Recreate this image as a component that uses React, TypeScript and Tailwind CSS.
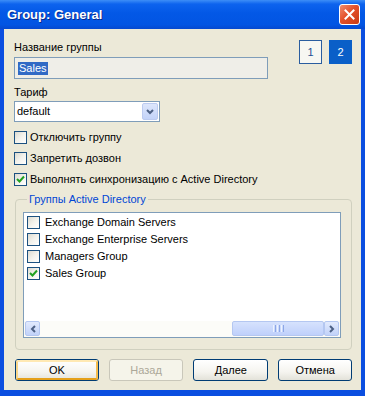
import React from "react";

function CheckBox({ checked = false }: { checked?: boolean }) {
  return (
    <span className="w-[13px] h-[13px] shrink-0 border border-[#1c5180] bg-[linear-gradient(135deg,#dcdad0_0%,#f3f2ec_50%,#ffffff_100%)] flex items-center justify-center">
      {checked && (
        <svg width="9" height="9" viewBox="0 0 9 9">
          <polyline points="1,4 3.5,6.5 8,1.5" fill="none" stroke="#21a121" strokeWidth="2" />
        </svg>
      )}
    </span>
  );
}

function XpButton({
  label,
  w,
  focus = false,
  disabled = false,
}: {
  label: string;
  w: string;
  focus?: boolean;
  disabled?: boolean;
}) {
  if (disabled) {
    return (
      <div className={`${w} h-[22px] rounded-[3px] border border-[#c9c7ba] bg-[#f5f4ea] flex items-center justify-center text-[#aca899]`}>
        {label}
      </div>
    );
  }
  return (
    <div className={`${w} h-[22px] rounded-[3px] border border-[#003c74] bg-[linear-gradient(to_bottom,#ffffff_0%,#f5f4ef_60%,#e3e2d9_100%)] flex items-center justify-center`}>
      {focus ? (
        <div className="w-full h-full rounded-[2px] border-[2px] border-t-[#ffe9b4] border-l-[#f9d68a] border-r-[#f5bd4f] border-b-[#e5a01a] flex items-center justify-center">
          {label}
        </div>
      ) : (
        label
      )}
    </div>
  );
}

export default function App() {
  const items: [string, boolean][] = [
    ["Exchange Domain Servers", false],
    ["Exchange Enterprise Servers", false],
    ["Managers Group", false],
    ["Sales Group", true],
  ];
  return (
    <div className="w-[365px] h-[396px] flex flex-col bg-[#0b4ee0] font-['Liberation_Sans',Arial,sans-serif] text-[11px] leading-[13px] text-black">
      {/* Title bar */}
      <div className="h-[29px] shrink-0 flex items-center justify-between pl-[7px] pr-[5px] bg-[linear-gradient(to_bottom,#3d8ef7_0%,#0d63ee_14%,#0358e6_45%,#0255e3_85%,#0649cf_100%)]">
        <span className="text-white font-bold text-[13px] leading-[16px] [text-shadow:1px_1px_0_#0a2a8c]">
          Group: General
        </span>
        <div className="w-[21px] h-[21px] rounded-[3px] border border-white bg-[linear-gradient(135deg,#f08d6f_0%,#e4502a_45%,#c93a14_100%)] flex items-center justify-center">
          <svg width="11" height="11" viewBox="0 0 11 11">
            <path d="M1.5 1.5 L9.5 9.5 M9.5 1.5 L1.5 9.5" stroke="#ffffff" strokeWidth="2" strokeLinecap="square" />
          </svg>
        </div>
      </div>

      {/* Body */}
      <div className="flex-1 mx-[4px] mb-[6px] bg-[#ece9d8] pl-[10px] pr-[9px] pt-[11px] flex flex-col">
        {/* Row 1 */}
        <div className="flex justify-between">
          <div className="flex flex-col">
            <span className="leading-[14px]">Название группы</span>
            <div className="mt-[3px] w-[254px] h-[22px] border border-[#7f9db9] bg-[#efeee8] flex items-center pl-[3px]">
              <span className="bg-[#316ac5] text-white px-[1px] leading-[13px]">Sales</span>
            </div>
          </div>
          <div className="flex gap-[7px]">
            <div className="w-[23px] h-[24px] border border-[#2a5d9f] bg-[#f7f7f2] text-[#1f4f92] flex items-center justify-center">
              1
            </div>
            <div className="w-[23px] h-[24px] bg-[#0a5fc8] text-white flex items-center justify-center">
              2
            </div>
          </div>
        </div>

        {/* Tariff */}
        <span className="mt-[6px] leading-[14px]">Тариф</span>
        <div className="mt-[2px] w-[146px] h-[21px] border border-[#7f9db9] bg-white flex items-center justify-between pl-[2px] pr-[1px]">
          <span>default</span>
          <div className="w-[16px] h-[17px] rounded-[2px] bg-[linear-gradient(to_bottom,#dde6fb_0%,#c3d3f9_100%)] border border-[#bccbf0] flex items-center justify-center">
            <svg width="8" height="6" viewBox="0 0 8 6">
              <polyline points="1,1 4,4 7,1" fill="none" stroke="#4d6185" strokeWidth="2" />
            </svg>
          </div>
        </div>

        {/* Checkboxes */}
        <div className="mt-[5px] flex flex-col">
          <label className="h-[21px] flex items-center gap-[3px]">
            <CheckBox />
            <span>Отключить группу</span>
          </label>
          <label className="h-[21px] flex items-center gap-[3px]">
            <CheckBox />
            <span>Запретить дозвон</span>
          </label>
          <label className="h-[21px] flex items-center gap-[3px]">
            <CheckBox checked />
            <span>Выполнять синхронизацию с Active Directory</span>
          </label>
        </div>

        {/* Group box */}
        <fieldset className="mt-[3px] ml-[1px] border border-[#d0d0bf] rounded-[4px] pl-[7px] pr-[10px] pb-[11px] pt-[6px]">
          <legend className="ml-[4px] px-[2px] text-[#0046d5] leading-[13px]">Группы Active Directory</legend>
          <div className="h-[126px] border border-[#7f9db9] bg-white flex flex-col">
            <div className="flex-1 flex flex-col pt-[1px] pl-[3px]">
              {items.map(([name, checked]) => (
                <div key={name} className="h-[17px] flex items-center gap-[5px]">
                  <CheckBox checked={checked} />
                  <span>{name}</span>
                </div>
              ))}
            </div>
            {/* Horizontal scrollbar */}
            <div className="h-[16px] flex items-stretch bg-[#fcfcf8] pb-[1px] px-[1px]">
              <div className="w-[15px] rounded-[2px] bg-[linear-gradient(to_bottom,#e2eafd_0%,#c1d2f9_100%)] border border-[#b4c7f1] flex items-center justify-center">
                <svg width="6" height="8" viewBox="0 0 6 8">
                  <polyline points="5,1 2,4 5,7" fill="none" stroke="#4d6185" strokeWidth="2" />
                </svg>
              </div>
              <div className="flex-1 flex justify-end">
                <div className="w-[92px] rounded-[2px] bg-[linear-gradient(to_bottom,#d6e2fd_0%,#bfd0fb_100%)] border border-[#b4c7f1] flex items-center justify-center gap-[1px]">
                  <span className="w-[1px] h-[7px] bg-[#eef3fe]" />
                  <span className="w-[1px] h-[7px] bg-[#8ca7e6]" />
                  <span className="w-[1px] h-[7px] bg-[#eef3fe]" />
                  <span className="w-[1px] h-[7px] bg-[#8ca7e6]" />
                  <span className="w-[1px] h-[7px] bg-[#eef3fe]" />
                  <span className="w-[1px] h-[7px] bg-[#8ca7e6]" />
                </div>
              </div>
              <div className="w-[15px] rounded-[2px] bg-[linear-gradient(to_bottom,#e2eafd_0%,#c1d2f9_100%)] border border-[#b4c7f1] flex items-center justify-center">
                <svg width="6" height="8" viewBox="0 0 6 8">
                  <polyline points="1,1 4,4 1,7" fill="none" stroke="#4d6185" strokeWidth="2" />
                </svg>
              </div>
            </div>
          </div>
        </fieldset>

        {/* Buttons */}
        <div className="mt-[9px] ml-[1px] flex gap-[10px]">
          <XpButton label="OK" w="w-[84px]" focus />
          <XpButton label="Назад" w="w-[75px]" disabled />
          <XpButton label="Далее" w="w-[75px]" />
          <XpButton label="Отмена" w="w-[74px]" />
        </div>
      </div>
    </div>
  );
}
